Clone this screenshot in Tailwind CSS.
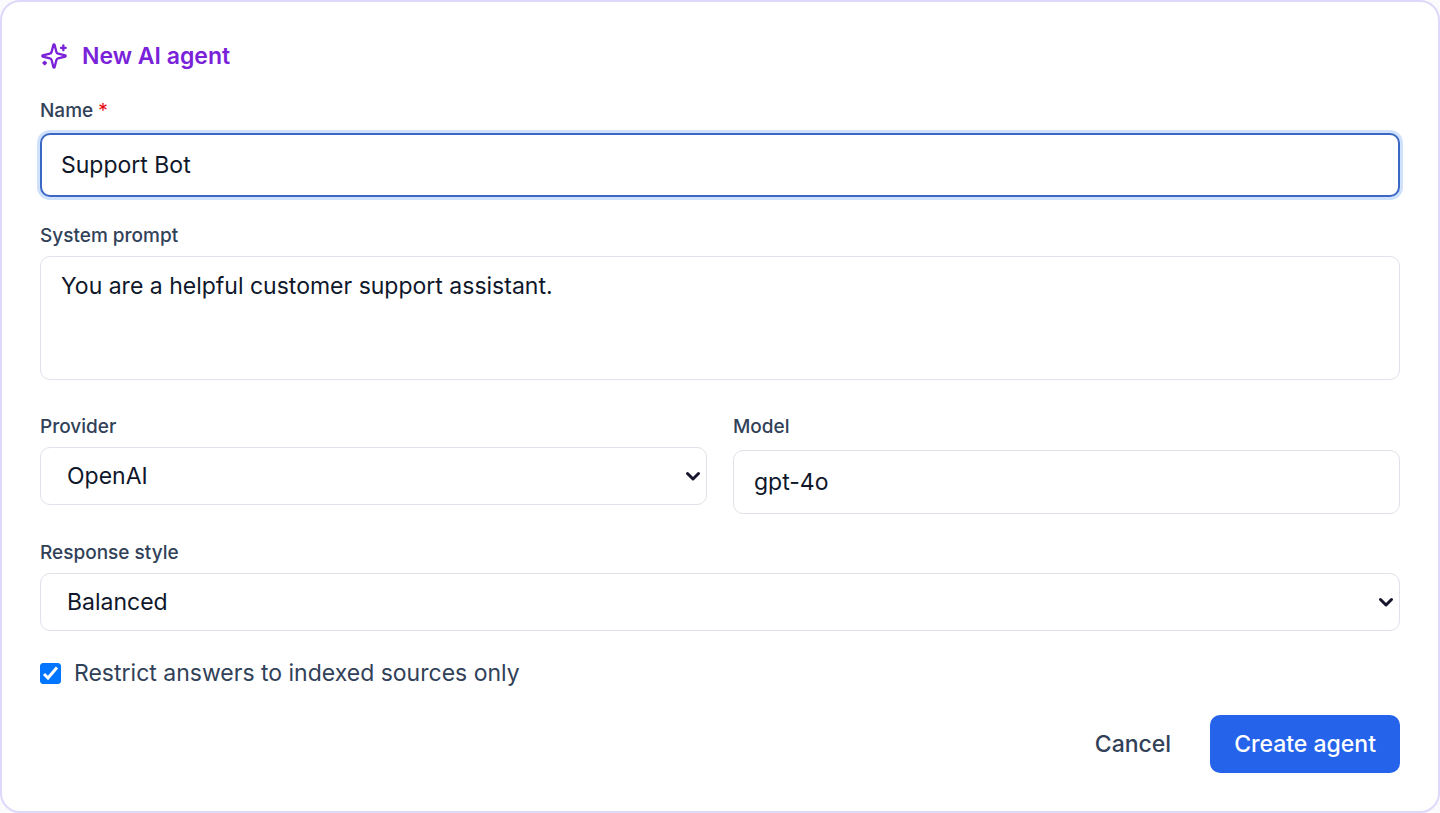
<!DOCTYPE html>
<html lang="en">
<head>
    <meta charset="UTF-8">
    <meta name="viewport" content="width=device-width, initial-scale=1.0">
    <title>New AI agent</title>
    <script src="https://cdn.jsdelivr.net/npm/@tailwindcss/browser@4"></script>
</head>
<body class="bg-[#fbfbfd] font-['Inter',sans-serif] text-[23px] text-slate-900">
    <form class="flex flex-col gap-[26px] rounded-[20px] border-2 border-[#ddd9fb] bg-white p-[38px]">
        <h1 class="flex h-8 items-center gap-3.5 font-semibold text-[#7a22d9]">
            <svg class="size-7" viewBox="0 0 24 24" fill="none" stroke="currentColor" stroke-width="2" stroke-linecap="round" stroke-linejoin="round">
                <path d="M9.937 15.5A2 2 0 0 0 8.5 14.063l-6.135-1.582a.5.5 0 0 1 0-.962L8.5 9.936A2 2 0 0 0 9.937 8.5l1.582-6.135a.5.5 0 0 1 .963 0L14.063 8.5A2 2 0 0 0 15.5 9.937l6.135 1.581a.5.5 0 0 1 0 .964L15.5 14.063a2 2 0 0 0-1.437 1.437l-1.582 6.135a.5.5 0 0 1-.963 0z"/>
                <path d="M20 3v4M22 5h-4M4 17v2M5 18H3"/>
            </svg>
            New AI agent
        </h1>

        <!-- Name -->
        <div class="flex flex-col gap-[9px]">
            <label for="name" class="text-[19px] leading-[26px] font-medium text-slate-700">Name <span class="font-normal text-red-600">*</span></label>
            <input type="text" id="name" value="Support Bot" required class="h-16 w-full rounded-[10px] border-2 border-[#3b68c4] bg-white px-[19px] ring-3 ring-[#cfe1fb] outline-none">
        </div>

        <!-- System prompt -->
        <div class="mb-2 flex flex-col gap-[7px]">
            <label for="prompt" class="text-[19px] leading-[26px] font-medium text-slate-700">System prompt</label>
            <textarea id="prompt" class="h-[124px] w-full resize-none rounded-[10px] border border-[#e0e2e9] bg-white px-5 py-[13px] leading-[33px] outline-none">You are a helpful customer support assistant.</textarea>
        </div>

        <!-- Provider and model -->
        <div class="grid grid-cols-2 items-start gap-[26px]">
            <div class="flex flex-col gap-[7px]">
                <label for="provider" class="text-[19px] leading-[26px] font-medium text-slate-700">Provider</label>
                <div class="relative">
                    <select id="provider" class="h-[58px] w-full appearance-none rounded-[10px] border border-[#e0e2e9] bg-white px-[26px] outline-none">
                        <option>OpenAI</option>
                    </select>
                    <svg class="pointer-events-none absolute top-[23px] right-[6px] h-3 w-4" viewBox="0 0 16 12" fill="none" stroke="#15152e" stroke-width="3" stroke-linecap="round" stroke-linejoin="round"><path d="M2.500 3.500 8 9l5.500-5.500"/></svg>
                </div>
            </div>
            <div class="flex flex-col gap-[10px]">
                <label for="model" class="text-[19px] leading-[26px] font-medium text-slate-700">Model</label>
                <input type="text" id="model" value="gpt-4o" class="h-16 w-full rounded-[10px] border border-[#e0e2e9] bg-white px-5 outline-none">
            </div>
        </div>

        <!-- Response style -->
        <div class="flex flex-col gap-[7px]">
            <label for="style" class="text-[19px] leading-[26px] font-medium text-slate-700">Response style</label>
            <div class="relative">
                <select id="style" class="h-[58px] w-full appearance-none rounded-[10px] border border-[#e0e2e9] bg-white px-[26px] outline-none">
                    <option>Balanced</option>
                </select>
                <svg class="pointer-events-none absolute top-[23px] right-[6px] h-3 w-4" viewBox="0 0 16 12" fill="none" stroke="#15152e" stroke-width="3" stroke-linecap="round" stroke-linejoin="round"><path d="M2.500 3.500 8 9l5.500-5.500"/></svg>
            </div>
        </div>

        <label for="restrict" class="flex h-8 items-center gap-[13px] text-slate-700">
            <span class="relative size-[21px]">
                <input type="checkbox" id="restrict" checked class="peer block size-[21px] appearance-none rounded-[3px] border border-slate-400 checked:border-[#0075ff] checked:bg-[#0075ff]">
                <svg class="pointer-events-none absolute inset-0 hidden size-[21px] peer-checked:block" viewBox="0 0 21 21" fill="none" stroke="#fff" stroke-width="3"><path d="m4 11 4 4 9-10.500"/></svg>
            </span>
            Restrict answers to indexed sources only
        </label>

        <div class="flex justify-end gap-[15px]">
            <button type="button" class="h-[58px] rounded-[10px] px-6 font-medium text-slate-700">Cancel</button>
            <button type="submit" class="h-[58px] rounded-[10px] bg-[#2563eb] px-6 font-medium text-white">Create agent</button>
        </div>
    </form>
</body>
</html>
